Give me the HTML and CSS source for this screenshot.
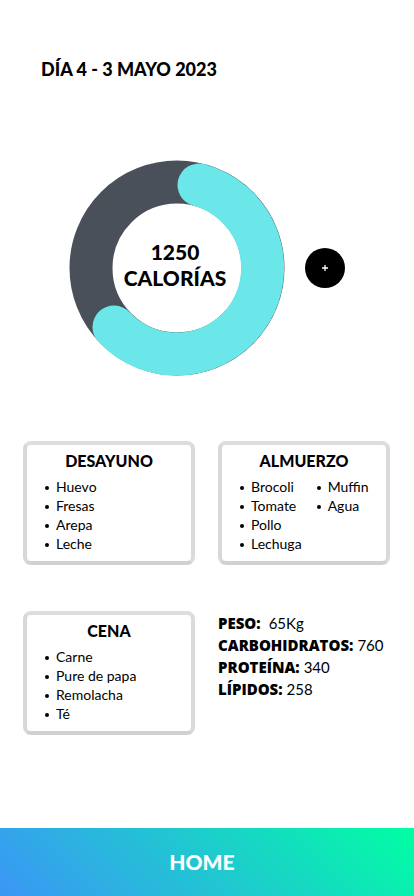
FILE: index.html
```html
<!DOCTYPE html>
<html lang="es">
<head>
<meta charset="utf-8">
<meta name="viewport" content="width=device-width, initial-scale=1">
<title>Día 4</title>
<link rel="stylesheet" href="styles.css">
</head>
<body>
<header class="header"><h1 class="date">DÍA 4 - 3 MAYO 2023</h1></header>
<main class="main">
  <section class="summary">
    <div class="ring">
      <svg class="ring-chart" viewBox="0 0 216 216" aria-hidden="true">
        <circle class="ring-track" cx="108" cy="108" r="86"/>
        <path class="ring-value" d="M130 25A86 86 0 1 1 45 167"/>
      </svg>
      <p class="calories">1250<br>CALORÍAS</p>
    </div>
    <button class="add" type="button" aria-label="Agregar">
      <svg class="add-icon" viewBox="0 0 6 6" aria-hidden="true"><path d="M3 0V6M0 3H6"/></svg>
    </button>
  </section>
  <div class="grid">
    <section class="card">
      <h2 class="card-title">DESAYUNO</h2>
      <div class="lists">
        <ul class="foods"><li>Huevo</li><li>Fresas</li><li>Arepa</li><li>Leche</li></ul>
      </div>
    </section>
    <section class="card">
      <h2 class="card-title">ALMUERZO</h2>
      <div class="lists">
        <ul class="foods"><li>Brocoli</li><li>Tomate</li><li>Pollo</li><li>Lechuga</li></ul>
        <ul class="foods"><li>Muffin</li><li>Agua</li></ul>
      </div>
    </section>
    <section class="card">
      <h2 class="card-title">CENA</h2>
      <div class="lists">
        <ul class="foods"><li>Carne</li><li>Pure de papa</li><li>Remolacha</li><li>Té</li></ul>
      </div>
    </section>
    <dl class="stats">
      <div class="stat"><dt>PESO:</dt><dd class="spaced">65Kg</dd></div>
      <div class="stat"><dt>CARBOHIDRATOS:</dt><dd>760</dd></div>
      <div class="stat"><dt>PROTEÍNA:</dt><dd>340</dd></div>
      <div class="stat"><dt>LÍPIDOS:</dt><dd>258</dd></div>
    </dl>
  </div>
</main>
<footer class="footer"><a class="home" href="#">HOME</a></footer>
</body>
</html>
```
FILE: styles.css
```css
* { box-sizing: border-box; }
body {
  margin: 0;
  min-height: 100vh;
  display: flex;
  flex-direction: column;
  background: #fff;
  color: #000;
  font-family: Lato, "Liberation Sans", sans-serif;
}
h1, h2, p, ul, dl, dd { margin: 0; padding: 0; }
.header { padding: 58px 41px 0; }
.date { font-size: 18px; line-height: 22px; font-weight: 900; }
.main { flex: 1; }
.summary {
  display: flex;
  align-items: center;
  gap: 20px;
  padding: 80px 0 0 69px;
}
.ring { display: grid; place-items: center; width: 216px; }
.ring-chart { grid-area: 1 / 1; display: block; width: 100%; }
.ring-track { fill: none; stroke: #495059; stroke-width: 43; }
.ring-value { fill: none; stroke: #6be6e9; stroke-width: 43; stroke-linecap: round; }
.calories {
  grid-area: 1 / 1;
  padding: 0 4px 6px 0;
  text-align: center;
  font-size: 21px;
  line-height: 26px;
  font-weight: 900;
}
.add {
  display: grid;
  place-items: center;
  width: 40px;
  height: 40px;
  padding: 0;
  border: 0;
  border-radius: 50%;
  background: #000;
}
.add-icon { width: 6px; height: 6px; fill: none; stroke: #fff; stroke-width: 1.3; }
.grid {
  display: grid;
  grid-template-columns: 1fr 1fr;
  gap: 46px 23px;
  padding: 65px 24px 0 23px;
}
.card {
  min-height: 124px;
  padding: 5px 0;
  border: 4px solid #d7d8d8;
  border-color: #dcdddd #d9dada #d0d1d1 #d7d8d8;
  border-radius: 8px;
}
.card-title { text-align: center; font-size: 16px; line-height: 22px; font-weight: 900; }
.lists { display: flex; gap: 26px; padding: 5px 0 0 29px; }
.foods { list-style: none; font-size: 14px; line-height: 19px; }
.foods li { position: relative; }
.foods li::before {
  content: "";
  position: absolute;
  left: -11px;
  top: 9px;
  width: 4px;
  height: 4px;
  border-radius: 50%;
  background: #000;
}
.stats { padding-top: 1px; }
.stat { display: flex; gap: 4px; line-height: 22px; white-space: nowrap; }
.stat dt { font-family: "Open Sans", sans-serif; font-size: 15px; font-weight: 800; }
.stat dd { font-size: 15px; }
.stat .spaced { padding-left: 4px; }
.footer {
  display: grid;
  place-items: center;
  min-height: 68px;
  background: linear-gradient(45deg, #3b96f5, #20c8d0 50%, #00ffa3);
}
.home { padding-right: 10px; color: #fff; font-size: 21px; line-height: 28px; font-weight: 900; text-decoration: none; }
```
